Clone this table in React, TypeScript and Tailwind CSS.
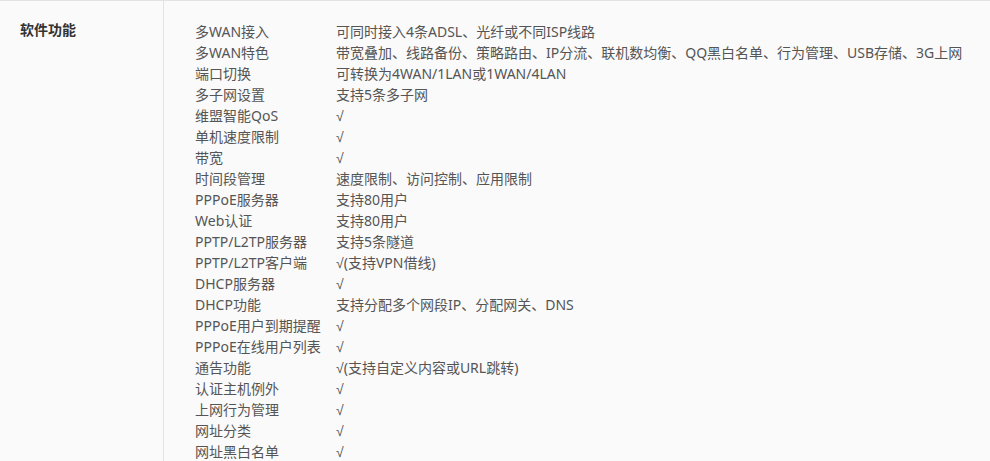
import React from "react";

// 软件功能参数表
const features: [string, string][] = [
  ["多WAN接入", "可同时接入4条ADSL、光纤或不同ISP线路"],
  ["多WAN特色", "带宽叠加、线路备份、策略路由、IP分流、联机数均衡、QQ黑白名单、行为管理、USB存储、3G上网"],
  ["端口切换", "可转换为4WAN/1LAN或1WAN/4LAN"],
  ["多子网设置", "支持5条多子网"],
  ["维盟智能QoS", "√"],
  ["单机速度限制", "√"],
  ["带宽", "√"],
  ["时间段管理", "速度限制、访问控制、应用限制"],
  ["PPPoE服务器", "支持80用户"],
  ["Web认证", "支持80用户"],
  ["PPTP/L2TP服务器", "支持5条隧道"],
  ["PPTP/L2TP客户端", "√(支持VPN借线)"],
  ["DHCP服务器", "√"],
  ["DHCP功能", "支持分配多个网段IP、分配网关、DNS"],
  ["PPPoE用户到期提醒", "√"],
  ["PPPoE在线用户列表", "√"],
  ["通告功能", "√(支持自定义内容或URL跳转)"],
  ["认证主机例外", "√"],
  ["上网行为管理", "√"],
  ["网址分类", "√"],
  ["网址黑白名单", "√"],
];

// √ 单独用窄一点的字体
function Value({ text }: { text: string }) {
  if (!text.startsWith("√")) return <>{text}</>;
  return (
    <>
      <span className="leading-none" style={{ fontFamily: '"Liberation Sans", sans-serif' }}>√</span>
      {text.slice(1)}
    </>
  );
}

export default function App() {
  return (
    <div
      className="w-[990px] h-[461px] overflow-hidden bg-[#fafafa] border-t border-[#e3e3e3] flex"
      style={{ fontFamily: '"Noto Sans", "Noto Sans CJK SC", sans-serif' }}
    >
      <div className="w-[164px] shrink-0 border-r border-[#e3e3e3] pl-[20px] pt-[16px]">
        <span className="text-[14px] leading-[21px] font-bold text-[#333]">软件功能</span>
      </div>
      <div className="flex-1 pl-[31px] pt-[20px]">
        {features.map(([name, value]) => (
          <div key={name} className="flex h-[21px] text-[14px] leading-[21px] text-[#555] whitespace-nowrap">
            <div className="w-[141px] shrink-0">{name}</div>
            <div>
              <Value text={value} />
            </div>
          </div>
        ))}
      </div>
    </div>
  );
}
